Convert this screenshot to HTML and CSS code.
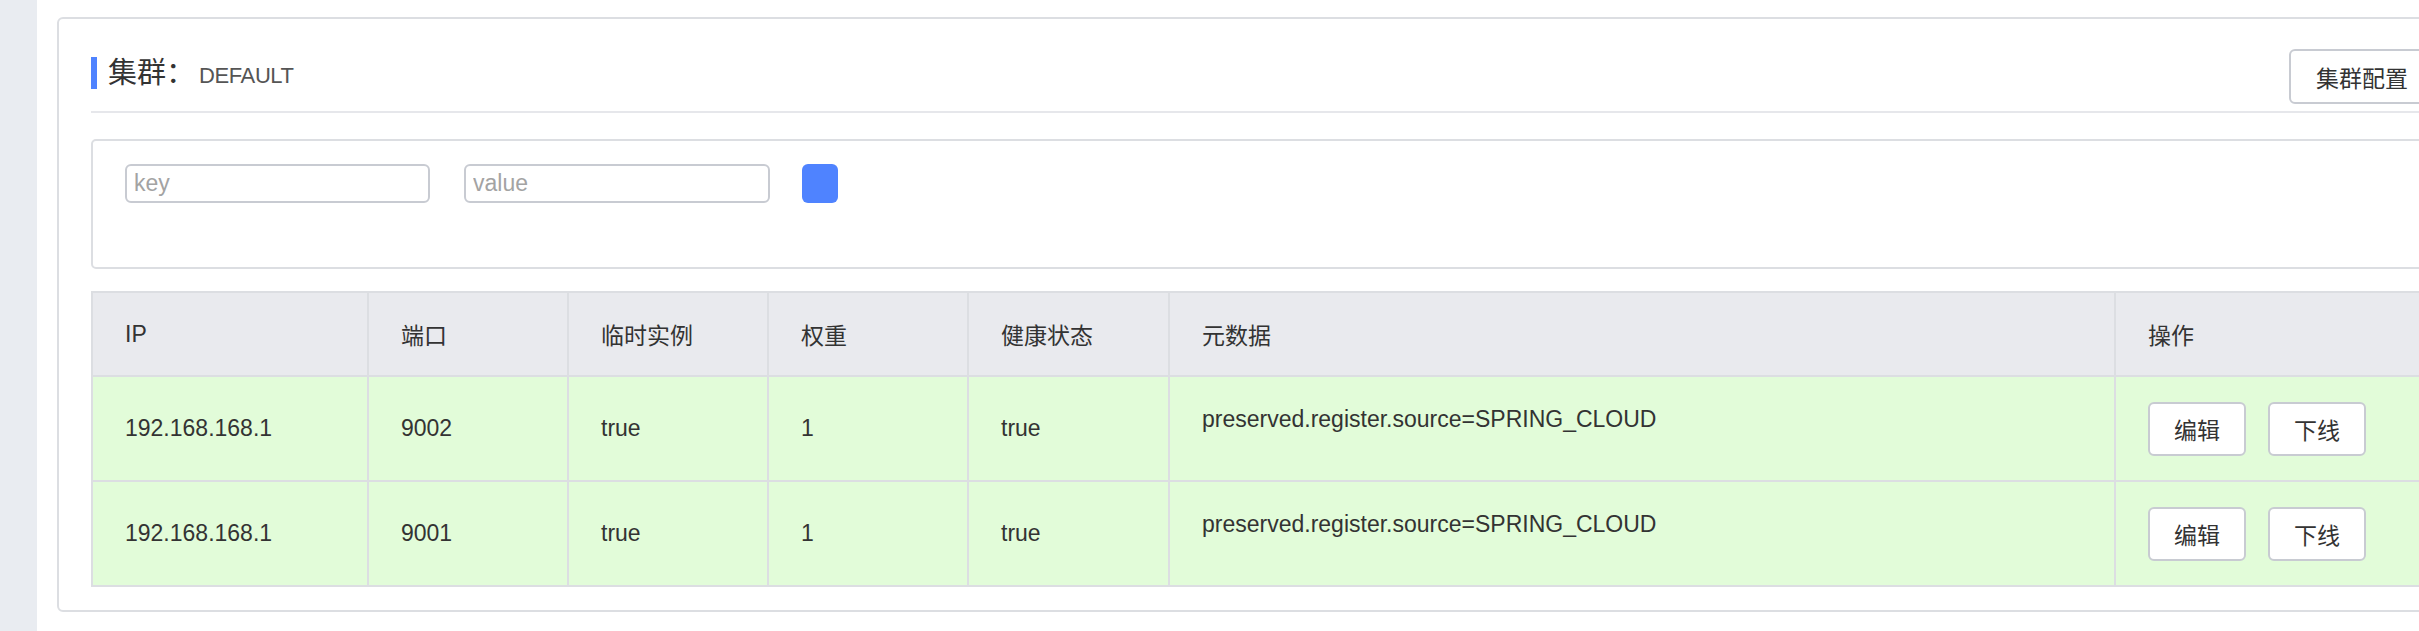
FILE: index.html
```html
<!DOCTYPE html>
<html lang="zh-CN">
<head>
<meta charset="utf-8">
<title>集群</title>
<link rel="stylesheet" href="styles.css">
</head>
<body>
<div class="layout">
  <aside class="sidebar"></aside>
  <main class="main">
    <section class="card">
      <header class="card-head">
        <h2 class="title"><span class="title-main">集群：</span><span class="title-sub">DEFAULT</span></h2>
        <button class="btn btn-config" type="button">集群配置</button>
      </header>
      <form class="filter">
        <input class="input" type="text" placeholder="key">
        <input class="input" type="text" placeholder="value">
        <button class="btn-search" type="button"></button>
      </form>
      <table class="grid">
        <colgroup>
          <col class="c-ip"><col class="c-port"><col class="c-eph"><col class="c-weight"><col class="c-health"><col class="c-meta"><col class="c-op">
        </colgroup>
        <thead>
          <tr><th>IP</th><th>端口</th><th>临时实例</th><th>权重</th><th>健康状态</th><th>元数据</th><th>操作</th></tr>
        </thead>
        <tbody>
          <tr>
            <td>192.168.168.1</td><td>9002</td><td>true</td><td>1</td><td>true</td>
            <td><div class="meta">preserved.register.source=SPRING_CLOUD</div></td>
            <td><div class="ops"><button class="btn btn-op" type="button">编辑</button><button class="btn btn-op" type="button">下线</button></div></td>
          </tr>
          <tr>
            <td>192.168.168.1</td><td>9001</td><td>true</td><td>1</td><td>true</td>
            <td><div class="meta">preserved.register.source=SPRING_CLOUD</div></td>
            <td><div class="ops"><button class="btn btn-op" type="button">编辑</button><button class="btn btn-op" type="button">下线</button></div></td>
          </tr>
        </tbody>
      </table>
    </section>
  </main>
</div>
</body>
</html>
```
FILE: styles.css
```css
* { box-sizing: border-box; }
html, body { margin: 0; padding: 0; }
body {
  background: #fff;
  color: #333;
  font-family: "Liberation Sans", "Noto Sans CJK SC", sans-serif;
  font-size: 23px;
  overflow: hidden;
  width: 2419px;
  height: 631px;
}
.layout { display: flex; align-items: stretch; height: 631px; }
.sidebar { width: 37px; flex-shrink: 0; background: #e9ecf1; }
.main { flex-shrink: 0; padding: 17px 0 0 20px; }
.card {
  width: 2412px;
  border: 2px solid #dcdee2;
  border-radius: 6px;
  padding: 0 32px 23px 32px;
  background: #fff;
}
.card-head {
  display: flex;
  justify-content: space-between;
  align-items: flex-start;
  padding-top: 30px;
  padding-bottom: 7px;
  border-bottom: 2px solid #e6e7eb;
}
.title {
  margin: 8px 0 0 0;
  height: 32px;
  line-height: 32px;
  border-left: 6px solid #4f83ff;
  padding-left: 11px;
  font-weight: normal;
  display: flex;
  align-items: baseline;
  white-space: nowrap;
}
.title-main { font-size: 29px; color: #333; }
.title-sub { font-size: 22px; color: #555; letter-spacing: -0.4px; margin-left: 4px; }
.btn {
  background: #fff;
  border: 2px solid #c8cbd2;
  border-radius: 6px;
  color: #333;
  font-family: inherit;
  font-size: 23px;
  cursor: pointer;
}
.btn-config { height: 55px; padding: 0 25px; }
.filter {
  margin: 26px 0 0 0;
  border: 2px solid #dcdee2;
  border-radius: 5px;
  padding: 23px 32px 64px 32px;
  display: flex;
  align-items: center;
}
.input {
  width: 305px;
  height: 39px;
  border: 2px solid #c8cbd2;
  border-radius: 6px;
  padding: 0 7px;
  font-family: inherit;
  font-size: 23px;
  color: #333;
  margin-right: 34px;
}
.input + .input { width: 306px; margin-right: 32px; }
.input::placeholder { color: #a3a3a3; }
.btn-search {
  width: 36px;
  height: 39px;
  border: none;
  border-radius: 6px;
  background: #4f83ff;
  padding: 0;
}
.grid {
  margin-top: 22px;
  border-collapse: collapse;
  table-layout: fixed;
  width: 2344px;
}
.c-ip { width: 276px; }
.c-port, .c-eph, .c-weight { width: 200px; }
.c-health { width: 201px; }
.c-meta { width: 946px; }
.c-op { width: 321px; }
.grid th, .grid td {
  border: 2px solid #dcdee2;
  text-align: left;
  vertical-align: middle;
  padding: 0 0 0 32px;
  white-space: nowrap;
  overflow: hidden;
}
.grid th {
  background: #e9eaee;
  font-weight: normal;
  height: 84px;
  color: #333;
}
.grid td {
  background: #e2fcd9;
  height: 105px;
}
.meta { padding-bottom: 20px; line-height: 26px; }
.ops { display: flex; gap: 22px; }
.btn-op { height: 54px; width: 98px; padding: 0; }
```
